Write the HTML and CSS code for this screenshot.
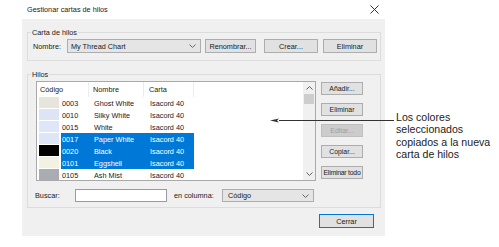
FILE: index.html
```html
<!DOCTYPE html>
<html lang="es">
<head>
    <meta charset="UTF-8">
    <title>Gestionar cartas de hilos</title>
    <link rel="stylesheet" href="styles.css">
</head>
<body>
    <div class="dialog">
        <div class="titlebar">
            <span>Gestionar cartas de hilos</span>
            <svg class="closex" width="9" height="9" viewBox="0 0 9 9"><path d="M0.5 0.5 L8.5 8.5 M8.5 0.5 L0.5 8.5" stroke="#333" stroke-width="1" fill="none"/></svg>
        </div>
        <div class="body">
            <div class="group chartgroup">
                <span class="legend">Carta de hilos</span>
                <div class="namerow">
                    <span class="lbl namelbl">Nombre:</span>
                    <div class="combo namecombo">
                        <span>My Thread Chart</span>
                        <svg width="7" height="4" viewBox="0 0 7 4"><path d="M0.5 0.5 L3.5 3.5 L6.5 0.5" stroke="#666" fill="none"/></svg>
                    </div>
                    <button class="btn renbtn">Renombrar...</button>
                    <button class="btn crearbtn">Crear...</button>
                    <button class="btn elimbtn">Eliminar</button>
                </div>
            </div>

            <div class="group threadgroup">
                <span class="legend">Hilos</span>
                <div class="listrow">
                    <div class="list">
                        <div class="table">
                            <div class="head">
                                <div class="hcell hc1">Código</div>
                                <div class="hcell hc2">Nombre</div>
                                <div class="hcell hc3">Carta</div>
                            </div>
                            <div class="row">
                                <div class="swatch" style="background:#e6e4db"></div>
                                <div class="cells"><span class="code">0003</span><span class="name">Ghost White</span><span class="chart">Isacord 40</span></div>
                            </div>
                            <div class="row">
                                <div class="swatch" style="background:#dce4f5"></div>
                                <div class="cells"><span class="code">0010</span><span class="name">Silky White</span><span class="chart">Isacord 40</span></div>
                            </div>
                            <div class="row">
                                <div class="swatch" style="background:#dee6f7"></div>
                                <div class="cells"><span class="code">0015</span><span class="name">White</span><span class="chart">Isacord 40</span></div>
                            </div>
                            <div class="row selected">
                                <div class="swatch" style="background:#dde5f7"></div>
                                <div class="cells"><span class="code">0017</span><span class="name">Paper White</span><span class="chart">Isacord 40</span></div>
                            </div>
                            <div class="row selected">
                                <div class="swatch" style="background:#000000"></div>
                                <div class="cells"><span class="code">0020</span><span class="name">Black</span><span class="chart">Isacord 40</span></div>
                            </div>
                            <div class="row selected">
                                <div class="swatch" style="background:#f3f1e2"></div>
                                <div class="cells"><span class="code">0101</span><span class="name">Eggshell</span><span class="chart">Isacord 40</span></div>
                            </div>
                            <div class="row">
                                <div class="swatch" style="background:#a9adb1"></div>
                                <div class="cells"><span class="code">0105</span><span class="name">Ash Mist</span><span class="chart">Isacord 40</span></div>
                            </div>
                        </div>
                        <div class="scroll">
                            <div class="sarrow"><svg width="7" height="4" viewBox="0 0 7 4"><path d="M0.5 3.5 L3.5 0.5 L6.5 3.5" stroke="#606060" fill="none"/></svg></div>
                            <div class="thumb"></div>
                            <div class="track"></div>
                            <div class="sarrow"><svg width="7" height="4" viewBox="0 0 7 4"><path d="M0.5 0.5 L3.5 3.5 L6.5 0.5" stroke="#606060" fill="none"/></svg></div>
                        </div>
                    </div>
                    <div class="sidebtns">
                        <button class="btn side">Añadir...</button>
                        <button class="btn side">Eliminar</button>
                        <button class="btn side" disabled>Editar...</button>
                        <button class="btn side">Copiar...</button>
                        <button class="btn side tight">Eliminar todo</button>
                    </div>
                </div>
                <div class="searchrow">
                    <span class="lbl searchlbl">Buscar:</span>
                    <div class="input"></div>
                    <span class="lbl collbl">en columna:</span>
                    <div class="combo colcombo">
                        <span>Código</span>
                        <svg width="7" height="4" viewBox="0 0 7 4"><path d="M0.5 0.5 L3.5 3.5 L6.5 0.5" stroke="#666" fill="none"/></svg>
                    </div>
                </div>
            </div>

            <div class="footer">
                <button class="btn closebtn">Cerrar</button>
            </div>
        </div>
    </div>

    <div class="callout">
        <svg class="arrowhead" width="10" height="5" viewBox="0 0 10 5"><path d="M0 2.5 L9 0.5 L7 2.5 L9 4.5 Z" fill="#333"/></svg>
        <div class="leader"></div>
    </div>
    <div class="note">Los colores<br>seleccionados<br>copiados a la nueva<br>carta de hilos</div>
</body>
</html>
```

FILE: styles.css
```css
body {
    margin: 0;
    width: 499px;
    height: 247px;
    background: #fff;
    font-family: "Liberation Sans", Arial, sans-serif;
    font-size: 7.3px;
    color: #1a1a1a;
    position: relative;
    overflow: hidden;
}
.dialog {
    margin-left: 22px;
    width: 363px;
}
.titlebar {
    height: 19px;
    display: flex;
    align-items: center;
    justify-content: space-between;
    padding: 0 6px 0 5px;
    background: #fff;
}
.body {
    background: #f0f0f0;
    height: 217px;
    padding: 13px 4px 0 5px;
    box-sizing: border-box;
}
.group {
    border: 1px solid #dcdcdc;
    position: relative;
}
.legend {
    position: absolute;
    top: -5px;
    left: 3px;
    padding: 0 1px;
    line-height: 9px;
    background: #f0f0f0;
}
.lbl {
    white-space: nowrap;
}
.btn {
    font: inherit;
    color: #1a1a1a;
    height: 14px;
    padding: 0;
    border: 1px solid #adadad;
    background: #e1e1e1;
    box-sizing: border-box;
    display: flex;
    align-items: center;
    justify-content: center;
    white-space: nowrap;
}
.btn:disabled {
    color: #a0a0a0;
    background: #cccccc;
    border-color: #bfbfbf;
}
.combo {
    height: 14px;
    border: 1px solid #adadad;
    background: #e5e5e5;
    box-sizing: border-box;
    display: flex;
    align-items: center;
    justify-content: space-between;
    padding: 0 4px 0 3px;
}

/* carta de hilos */
.chartgroup {
    padding: 6px 0 7px 5px;
}
.namerow {
    display: flex;
    align-items: center;
}
.namelbl {
    width: 34px;
}
.namecombo {
    width: 134px;
}
.renbtn {
    width: 51px;
    margin-left: 4px;
}
.crearbtn {
    width: 54px;
    margin-left: 8px;
}
.elimbtn {
    width: 54px;
    margin-left: 5px;
}

/* hilos */
.threadgroup {
    margin-top: 13px;
    padding: 6px 0 5px 8px;
}
.listrow {
    display: flex;
}
.list {
    width: 280px;
    height: 100px;
    border: 1px solid #a9a9a9;
    background: #fff;
    box-sizing: border-box;
    display: flex;
    overflow: hidden;
}
.table {
    flex: 1;
}
.head {
    display: flex;
    height: 15px;
}
.hcell {
    display: flex;
    align-items: center;
    border-right: 1px solid #ececec;
    box-sizing: border-box;
}
.hc1 {
    width: 52px;
    padding-left: 3px;
}
.hc2 {
    width: 55px;
    padding-left: 4px;
}
.hc3 {
    width: 50px;
    padding-left: 5px;
}
.row {
    display: flex;
    height: 12px;
}
.swatch {
    width: 20px;
    height: 11px;
    margin: 0 2px 0 2px;
}
.cells {
    display: flex;
    align-items: center;
    width: 133px;
}
.row.selected .cells {
    background: #0078d7;
    color: #fff;
}
.code {
    width: 28px;
    padding-left: 1px;
}
.name {
    width: 51px;
    padding-left: 4px;
}
.chart {
    padding-left: 5px;
}
.scroll {
    width: 12px;
    background: #f0f0f0;
    display: flex;
    flex-direction: column;
}
.sarrow {
    height: 12px;
    display: flex;
    align-items: center;
    justify-content: center;
}
.thumb {
    height: 10px;
    margin: 0 1px;
    background: #cdcdcd;
}
.track {
    flex: 1;
}
.sidebtns {
    margin-left: 5px;
    height: 97px;
    display: flex;
    flex-direction: column;
    justify-content: space-between;
    padding-top: 1px;
}
.btn.side {
    width: 42px;
    height: 13px;
    font-size: 6.9px;
}
.btn.tight {
    letter-spacing: -0.25px;
}
.searchrow {
    display: flex;
    align-items: center;
    margin-top: 8px;
    height: 13px;
}
.searchlbl {
    width: 40px;
    margin-left: -1px;
}
.input {
    width: 92px;
    height: 13px;
    background: #fff;
    border: 1px solid #9a9a9a;
    box-sizing: border-box;
}
.collbl {
    margin-left: 7px;
    width: 48px;
}
.colcombo {
    width: 92px;
    height: 13px;
    padding-left: 5px;
}

/* pie */
.footer {
    display: flex;
    justify-content: flex-end;
    padding: 6px 7px 0 0;
}
.closebtn {
    width: 55px;
    border-color: #0078d7;
}

/* nota */
.callout {
    position: absolute;
    left: 270px;
    top: 118px;
    display: flex;
    align-items: center;
}
.arrowhead {
    display: block;
}
.leader {
    width: 115px;
    height: 1px;
    margin-left: -1px;
    background: #333;
}
.note {
    position: absolute;
    left: 396px;
    top: 111px;
    font-size: 10.6px;
    line-height: 12.4px;
    color: #222;
}
```
